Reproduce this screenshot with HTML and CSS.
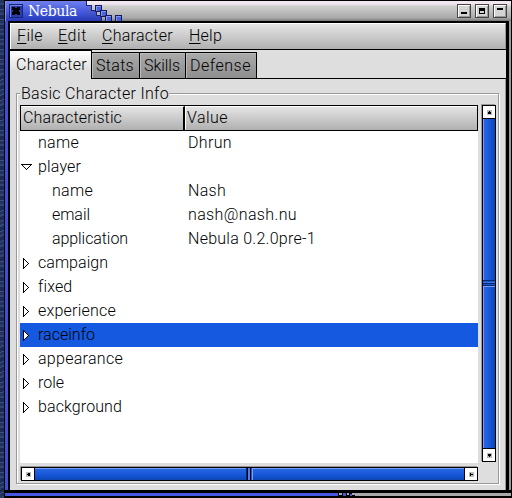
FILE: index.html
```
<!DOCTYPE html>
<html lang="en">
<head>
<meta charset="utf-8">
<title>Nebula</title>
<link rel="stylesheet" href="styles.css">
</head>
<body>
<div class="desktop">
<div class="window">
  <header class="titlebar">
    <div class="title-blue">
      <svg class="close" width="14" height="14" viewBox="0 0 14 14" shape-rendering="crispEdges"><path fill="#172376" d="M0 0h14v14H0z"/><path fill="#7183eb" d="M1 1h12v12H1z"/><path fill="#2a3bab" d="M2 2h11v11H2z"/><path d="M3 3h3v1h2V3h3v3h-1v2h1v3H8v-1H6v1H3V8h1V6H3z"/></svg>
      <h1 data-w="49">Nebula</h1>
    </div>
    <svg class="cascade" width="40" height="20" viewBox="0 0 40 20" shape-rendering="crispEdges">
      <defs><linearGradient id="b" x2="0" y2="1"><stop stop-color="#7080ec"/><stop offset="1" stop-color="#2638b7"/></linearGradient>
      <g id="box"><path fill="#111a5c" d="M0 0h7v7H0z"/><path fill="#8494f2" d="M1 1h5v5H1z"/><path fill="#4a60dc" d="M2 2h4v4H2z"/></g></defs>
      <path fill="url(#b)" d="M0 0h1v5h5v5h5v5h5v5H0z"/>
      <path fill="none" stroke="#182478" d="M1.500 0v4.500h5V9.500h5V14.500h5V20"/>
      <use href="#box" x="10" y="4"/><use href="#box" x="15" y="9"/><use href="#box" x="20" y="14"/><use href="#box" x="30" y="14"/>
    </svg>
    <div class="window-buttons">
      <i class="wb"><svg width="8" height="8" viewBox="0 0 8 8"><path d="M1 5h6v2H1z"/></svg></i>
      <i class="wb"><svg width="8" height="8" viewBox="0 0 8 8"><path fill-rule="evenodd" d="M1 1h6v6H1zM2 4v2h4V4z"/></svg></i>
      <i class="wb"><svg width="8" height="8" viewBox="0 0 8 8"><path d="M1 1h6v2H1z"/></svg></i>
    </div>
  </header>
  <div class="frame">
    <nav class="menubar">
      <span class="m1" data-w="26"><u>F</u>ile</span><span class="m2" data-w="29"><u>E</u>dit</span><span class="m3" data-w="71"><u>C</u>haracter</span><span class="m4" data-w="33"><u>H</u>elp</span>
    </nav>
    <div class="tabs">
      <div class="tab active"><span data-w="71">Character</span></div><div class="tab t2"><span data-w="38">Stats</span></div><div class="tab t3"><span data-w="36">Skills</span></div><div class="tab t4"><span data-w="61">Defense</span></div><div class="tab-rest"></div>
    </div>
    <main class="page">
      <section class="group">
        <h2 class="legend"><span data-w="148">Basic Character Info</span></h2>
        <div class="view">
          <div class="tree">
            <div class="head"><div class="h1c"><span data-w="99">Characteristic</span></div><div class="h2c"><span data-w="41">Value</span></div></div>
            <div class="row"><i></i><b><span data-w="41">name</span></b><span data-w="44">Dhrun</span></div>
            <div class="row"><i><svg width="11" height="12"><path d="M.5 3.500h10l-5 5z"/></svg></i><b><span data-w="43">player</span></b></div>
            <div class="row child"><i></i><b><span data-w="41">name</span></b><span data-w="38">Nash</span></div>
            <div class="row child"><i></i><b><span data-w="38">email</span></b><span data-w="109">nash@nash.nu</span></div>
            <div class="row child"><i></i><b><span data-w="76">application</span></b><span data-w="128">Nebula 0.2.0pre-1</span></div>
            <div class="row"><i class="arrow"></i><b><span data-w="70">campaign</span></b></div>
            <div class="row"><i class="arrow"></i><b><span data-w="34">fixed</span></b></div>
            <div class="row"><i class="arrow"></i><b><span data-w="78">experience</span></b></div>
            <div class="row selected"><i class="arrow"></i><b><span data-w="57">raceinfo</span></b></div>
            <div class="row"><i class="arrow"></i><b><span data-w="85">appearance</span></b></div>
            <div class="row"><i class="arrow"></i><b><span data-w="26">role</span></b></div>
            <div class="row"><i class="arrow"></i><b><span data-w="84">background</span></b></div>
          </div>
          <div class="scroll vertical">
            <i class="step"><svg width="5" height="5"><path d="M2 1h1v1h1v2H1V2h1z"/></svg></i>
            <div class="thumb"><i class="grip"></i></div>
            <i class="step"><svg width="5" height="5"><path d="M1 1h3v2H3v1H2V3H1z"/></svg></i>
          </div>
          <div class="scroll horizontal">
            <i class="step"><svg width="5" height="5"><path d="M4 1v3H2V3H1V2h1V1z"/></svg></i>
            <div class="thumb"><i class="grip"></i></div>
            <i class="step"><svg width="5" height="5"><path d="M1 1h1v1h2v1H2v1H1z"/></svg></i>
          </div>
        </div>
      </section>
    </main>
  </div>
  <footer class="bottom"><svg width="17" height="3" viewBox="0 0 17 3" shape-rendering="crispEdges"><path fill="#000" d="M0 0h17v3H0z"/><path fill="#aaa" d="M1 0h3v2H1zM9 0h2v2H9zM14 0h3v2h-3z"/><path fill="#4555d5" d="M5 0h3v3H5zM12 1h2v2h-2z"/></svg></footer>
</div>
</div>
<script src="fit.js"></script>
</body>
</html>
```
FILE: fit.js
```
// Track each label so that it fills its nominal width.
document.querySelectorAll("[data-w]").forEach(function (el) {
  var range = document.createRange();
  range.selectNodeContents(el);
  var width = range.getBoundingClientRect().width;
  el.style.letterSpacing = (Number(el.dataset.w) - width) / el.textContent.length + "px";
});
var arrow = '<svg width="7" height="12"><path d="M.5 .5v10l5-5z"/></svg>';
document.querySelectorAll(".arrow").forEach(function (el) { el.innerHTML = arrow; });
```
FILE: styles.css
```
* { box-sizing: border-box; }
body { margin: 0; overflow: hidden; font: 300 16px/24px Roboto, "Liberation Sans", sans-serif; color: #000; }
svg { display: block; shape-rendering: crispEdges; }
span { white-space: nowrap; }
.desktop {
  height: 498px; padding-left: 4px;
  background: repeating-linear-gradient(173deg, #22345c 0 3px, #2f4572 3px 5px, #1b2a50 5px 9px, #3a5080 9px 10px);
}
.window { width: 508px; height: 498px; border-left: 1px solid #000; border-right: 1px solid #000; border-top: 1px solid #000; background: #000; display: flex; flex-direction: column; }
.titlebar { height: 20px; flex: none; display: flex; background: linear-gradient(#f2e8f2 0, #eee6ee 3px, #cfcfcf 5px, #a9a9a9 17px, #777 20px); }
.title-blue { width: 80px; display: flex; align-items: flex-start; padding: 3px 0 0 3px; background: linear-gradient(#7080ec, #4056dc 12px, #2638b7); border-left: 1px solid #8090f0; }
.close { flex: none; }
h1 { margin: -3px 0 0 5px; font: 400 14px/20px "DejaVu Serif", serif; color: #fff; }
.cascade { flex: none; }
.window-buttons { margin: 3px 4px 0 auto; display: flex; gap: 4px; }
.wb { width: 14px; height: 14px; border: 1px solid #444; background: #d4d4d4; box-shadow: inset 1px 1px #fff, inset -1px -1px #999; padding: 2px; }
.frame { flex: none; height: 469px; border-left: 3px solid #3b50d8; border-right: 2px solid #999; display: flex; flex-direction: column; padding: 2px 3px 0 2px; background: #000; }
.menubar { flex: none; height: 26px; display: flex; background: linear-gradient(#e6e6e6, #b0b0b0); border: 1px solid #fff; border-right-color: #999; border-bottom: 0; padding-left: 6px; line-height: 24px; }
.m2 { margin-left: 15px; }
.m3 { margin-left: 15px; }
.m4 { margin-left: 16px; }
u { text-decoration: underline; text-underline-offset: 2px; text-decoration-thickness: 1px; text-decoration-skip-ink: none; }
.tabs { flex: none; height: 30px; display: flex; align-items: flex-end; background: #dedede; border-top: 1px solid #000; }
.tab { height: 27px; border: solid #000; border-width: 1px 1px 1px 0; background: linear-gradient(#aaa, #8f8f8f); padding-left: 4px; line-height: 25px; box-shadow: inset 1px 1px #bbb; }
.tab.active { width: 82px; height: 29px; background: linear-gradient(#fff, #dedede 70%); border-width: 1px 1px 0 0; padding-left: 6px; line-height: 27px; box-shadow: none; }
.t2 { width: 48px; }
.t3 { width: 46px; }
.t4 { width: 71px; }
.tab-rest { flex: 1; border-bottom: 1px solid #000; height: 1px; }
.page { flex: 1; background: #dedede; border-right: 1px solid #999; padding: 14px 6px 6px; }
.group { height: 391px; border: 1px solid #999; box-shadow: inset 1px 1px #fff, 1px 1px #fff; padding: 0 2px 2px 3px; }
.legend { margin: -12px 0 0; font: inherit; height: 23px; width: 149px; background: #dedede; padding-left: 1px; line-height: 23px; }
.view { display: grid; grid-template-columns: 458px 14px; grid-template-rows: 358px 14px; gap: 4px; }
.tree { background: #fff; }
.head { height: 26px; display: flex; border: 1px solid #000; line-height: 22px; background: linear-gradient(#e6e6e6, #b0b0b0); }
.h1c { width: 164px; border-right: 2px solid #000; border-top: 1px solid #fff; padding-left: 2px; }
.h2c { flex: 1; border: solid #fff; border-width: 1px 0 0 1px; padding-left: 1px; }
.row { display: flex; height: 24px; line-height: 24px; }
.row > i { flex: none; width: 18px; padding: 6px 0 0 1px; }
.row > i.arrow { padding: 7px 0 0 3px; }
.row > b { flex: none; width: 150px; font-weight: inherit; }
.row path { fill: #fff; stroke: #000; }
.child > b { padding-left: 14px; }
.selected { background: #1459df; }
.scroll { border: 1px solid #000; display: flex; background: #000; gap: 1px; box-shadow: -1px -1px #999; }
.vertical { flex-direction: column; height: 357px; }
.horizontal { margin-left: 1px; }
.step { flex: none; width: 12px; height: 12px; background: #fff; display: flex; align-items: center; justify-content: center; }
.step svg { background: #bbb; }
.thumb { flex: 1; display: flex; align-items: center; justify-content: center; background: linear-gradient(90deg, #6e9cf8 0 1px, #2867e3 1px, #1556d7 60%, #0d45b2); }
.horizontal .thumb { background: linear-gradient(#6e9cf8 0 1px, #2867e3 1px, #1556d7 60%, #0d45b2); }
.vertical .grip { width: 12px; height: 7px; background: linear-gradient(#08286d 0 1px, #1556d7 1px 2px, #3f74e6 2px 3px, #08286d 3px 4px, #1556d7 4px 5px, #08286d 5px 6px, #75a1ff 6px); }
.horizontal .grip { width: 7px; height: 12px; background: linear-gradient(90deg, #08286d 0 1px, #000 1px 2px, #4f80e8 2px 4px, #000 4px 5px, #1556d7 5px 6px, #75a1ff 6px); }
.bottom { flex: none; margin-top: 3px; height: 3px; background: linear-gradient(90deg, #4558df 333px, #aaa 333px); }
.bottom svg { margin-left: 333px; }
```
